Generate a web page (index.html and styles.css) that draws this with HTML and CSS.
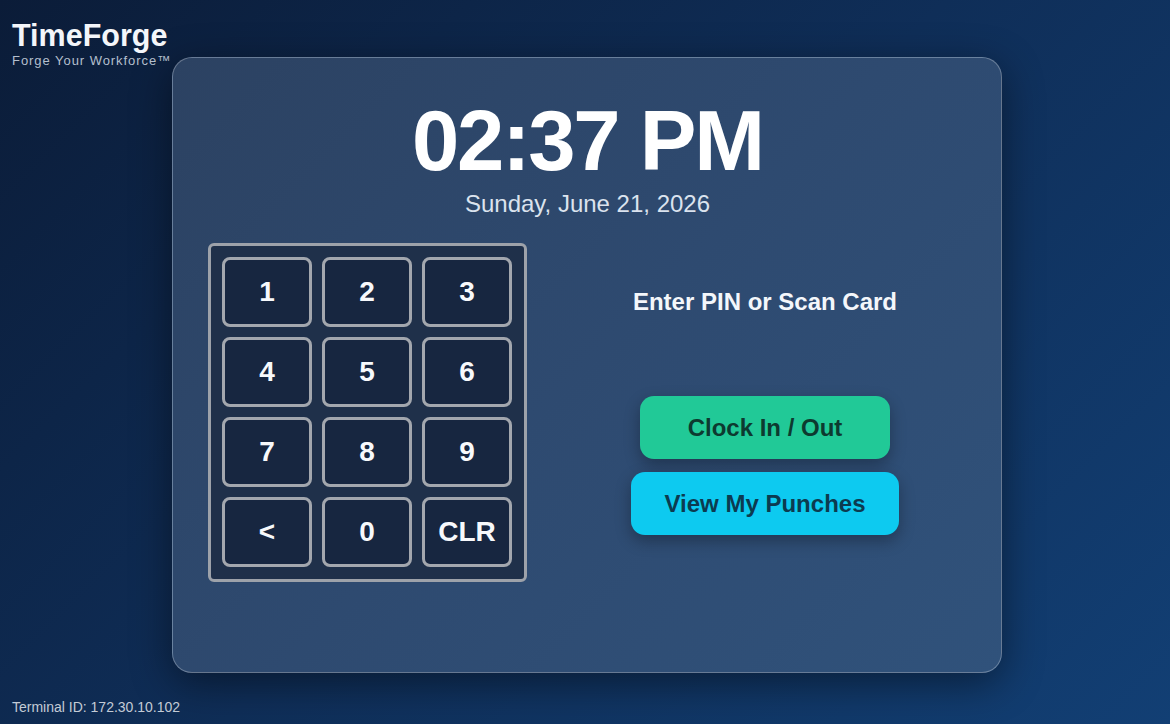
FILE: index.html
```html
<!DOCTYPE html>
<html lang="en">
<head>
<meta charset="utf-8">
<title>TimeForge</title>
<link rel="stylesheet" href="styles.css">
</head>
<body>
<header class="brand">
  <div class="brand-name">TimeForge</div>
  <div class="brand-tag">Forge Your Workforce™</div>
</header>
<main class="card">
  <div class="clock">02:37 PM</div>
  <div class="date">Sunday, June 21, 2026</div>
  <div class="panel">
    <div class="keypad">
      <button class="key">1</button>
      <button class="key">2</button>
      <button class="key">3</button>
      <button class="key">4</button>
      <button class="key">5</button>
      <button class="key">6</button>
      <button class="key">7</button>
      <button class="key">8</button>
      <button class="key">9</button>
      <button class="key">&lt;</button>
      <button class="key">0</button>
      <button class="key">CLR</button>
    </div>
    <div class="actions">
      <div class="prompt">Enter PIN or Scan Card</div>
      <div class="buttons">
        <button class="btn btn-clock">Clock In / Out</button>
        <button class="btn btn-punches">View My Punches</button>
      </div>
    </div>
  </div>
</main>
<footer class="terminal">Terminal ID: 172.30.10.102</footer>
</body>
</html>
```
FILE: styles.css
```css
* { box-sizing: border-box; }
html, body { height: 100%; }
body {
  margin: 0;
  font-family: "Liberation Sans", Arial, sans-serif;
  color: #fff;
  background: linear-gradient(135deg, #0b1c38 0%, #0f2e58 50%, #123f74 100%);
  display: flex;
  align-items: center;
  justify-content: center;
  overflow: hidden;
}
.brand {
  position: absolute;
  top: 18px;
  left: 12px;
}
.brand-name {
  font-size: 30.5px;
  font-weight: 700;
  line-height: 35px;
  color: #f4f6fa;
}
.brand-tag {
  font-size: 13px;
  letter-spacing: 0.95px;
  line-height: 15px;
  color: #b4bfcd;
}
.terminal {
  position: absolute;
  left: 12px;
  bottom: 9px;
  font-size: 14px;
  line-height: 16px;
  color: #c3cbd6;
}
.card {
  width: 830px;
  height: 616px;
  margin: 6px 0 0 4px;
  padding: 41px 34px 40px 35px;
  border: 1px solid rgba(255, 255, 255, 0.28);
  border-radius: 20px;
  background: linear-gradient(135deg, #2c4262 0%, #2e4a70 50%, #30527b 100%);
  box-shadow: 0 10px 40px rgba(0, 0, 0, 0.45);
  display: flex;
  flex-direction: column;
  align-items: center;
}
.clock {
  font-size: 85px;
  font-weight: 700;
  line-height: 84px;
  letter-spacing: -2.2px;
  color: #fff;
}
.date {
  margin-top: 6px;
  font-size: 24px;
  line-height: 29px;
  color: #dbe3ee;
}
.panel {
  align-self: stretch;
  margin-top: 25px;
  display: flex;
  gap: 36px;
}
.keypad {
  width: 319px;
  padding: 11px 12px 12px 11px;
  border: 3px solid #9da2aa;
  border-radius: 6px;
  background: #1f304a;
  display: grid;
  grid-template-columns: repeat(3, 90px);
  grid-auto-rows: 70px;
  column-gap: 10px;
  row-gap: 10px;
}
.key {
  font-family: "Liberation Sans", Arial, sans-serif;
  font-size: 28px;
  font-weight: 700;
  color: #f7f9fc;
  background: #172640;
  border: 3px solid #a3a7ae;
  border-radius: 8px;
  padding: 0;
}
.actions {
  flex: 1;
  display: flex;
  flex-direction: column;
  align-items: center;
  justify-content: center;
  padding-bottom: 2px;
}
.prompt {
  font-size: 24px;
  font-weight: 700;
  line-height: 28px;
  color: #f4f7fb;
  margin-bottom: 80px;
}
.buttons {
  display: flex;
  flex-direction: column;
  align-items: center;
  gap: 13px;
}
.btn {
  font-family: "Liberation Sans", Arial, sans-serif;
  font-size: 24px;
  font-weight: 700;
  height: 63px;
  min-width: 250px;
  padding: 0 34px;
  border: none;
  border-radius: 14px;
  box-shadow: 0 6px 16px rgba(0, 0, 0, 0.3);
}
.btn-clock {
  background: #21c997;
  color: #0d3a30;
}
.btn-punches {
  background: #0dcaf0;
  color: #0c3b50;
}
```
